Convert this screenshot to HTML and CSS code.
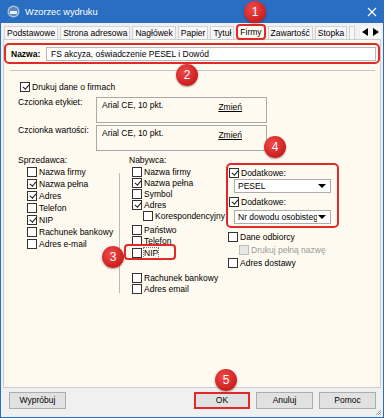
FILE: index.html
```html
<!DOCTYPE html>
<html lang="pl">
<head>
    <meta charset="UTF-8">
    <meta name="viewport" content="width=device-width, initial-scale=1.0">
    <title>Wzorzec wydruku</title>
    <link rel="stylesheet" href="styles.css">
</head>
<body>
<div class="window">
    <div class="titlebar">
        <svg class="app-icon" width="13" height="13" viewBox="0 0 13 13">
            <circle cx="6.5" cy="6.5" r="6" fill="#a9c3de"/>
            <circle cx="6.5" cy="6.5" r="4.6" fill="#5b86b8"/>
            <rect x="3" y="6" width="7" height="3" fill="#e8f0f8"/>
        </svg>
        <span class="title">Wzorzec wydruku</span>
        <svg class="close" width="10" height="10" viewBox="0 0 10 10">
            <path d="M1 1 L9 9 M9 1 L1 9" stroke="#fff" stroke-width="1.1"/>
        </svg>
    </div>

    <div class="tabs">
        <span class="tab">Podstawowe</span>
        <span class="tab">Strona adresowa</span>
        <span class="tab">Nagłówek</span>
        <span class="tab">Papier</span>
        <span class="tab">Tytuł</span>
        <span class="tab active">Firmy</span>
        <span class="tab">Zawartość</span>
        <span class="tab">Stopka</span>
        <span class="tab cut"></span>
        <span class="tab-arrows">
            <span class="arrow"><svg width="6" height="8" viewBox="0 0 6 8"><path d="M6 0 L0 4 L6 8 Z" fill="#000"/></svg></span>
            <span class="arrow"><svg width="6" height="8" viewBox="0 0 6 8"><path d="M0 0 L6 4 L0 8 Z" fill="#000"/></svg></span>
        </span>
    </div>

    <div class="page">
        <div class="name-row">
            <span class="name-label">Nazwa:</span>
            <span class="name-field">FS akcyza, oświadczenie PESEL i Dowód</span>
        </div>
        <div class="separator"></div>

        <div class="check print-row"><span class="cb on"></span>Drukuj dane o firmach</div>

        <div class="font-row">
            <span class="font-label">Czcionka etykiet:</span>
            <div class="font-box"><span>Arial CE, 10 pkt.</span><span class="link">Zmień</span></div>
        </div>
        <div class="font-row second">
            <span class="font-label">Czcionka wartości:</span>
            <div class="font-box"><span>Arial CE, 10 pkt.</span><span class="link">Zmień</span></div>
        </div>

        <div class="groups">
            <div class="seller">
                <div class="heading">Sprzedawca:</div>
                <div class="check"><span class="cb"></span>Nazwa firmy</div>
                <div class="check"><span class="cb on"></span>Nazwa pełna</div>
                <div class="check"><span class="cb on"></span>Adres</div>
                <div class="check"><span class="cb"></span>Telefon</div>
                <div class="check"><span class="cb on"></span>NIP</div>
                <div class="check"><span class="cb"></span>Rachunek bankowy</div>
                <div class="check"><span class="cb"></span>Adres e-mail</div>
            </div>
            <div class="divider"></div>
            <div class="buyer">
                <div class="heading">Nabywca:</div>
                <div class="check"><span class="cb"></span>Nazwa firmy</div>
                <div class="check"><span class="cb on"></span>Nazwa pełna</div>
                <div class="check"><span class="cb"></span>Symbol</div>
                <div class="check"><span class="cb on"></span>Adres</div>
                <div class="check sub"><span class="cb"></span>Korespondencyjny</div>
                <div class="check spaced"><span class="cb"></span>Państwo</div>
                <div class="check"><span class="cb"></span>Telefon</div>
                <div class="check nip"><span class="cb"></span><span class="focus">NIP</span></div>
                <div class="check far"><span class="cb"></span>Rachunek bankowy</div>
                <div class="check"><span class="cb"></span>Adres email</div>
            </div>
            <div class="extra">
                <div class="extra-box">
                    <div class="check"><span class="cb on"></span>Dodatkowe:</div>
                    <div class="select"><span class="select-text">PESEL</span><span class="caret"></span></div>
                    <div class="check second"><span class="cb on"></span>Dodatkowe:</div>
                    <div class="select"><span class="select-text">Nr dowodu osobistego</span><span class="caret"></span></div>
                </div>
                <div class="check tall"><span class="cb"></span>Dane odbiorcy</div>
                <div class="check tall disabled"><span class="cb"></span>Drukuj pełną nazwę</div>
                <div class="check tall"><span class="cb"></span>Adres dostawy</div>
            </div>
        </div>
    </div>

    <div class="footer">
        <span class="btn">Wypróbuj</span>
        <span class="btn ok">OK</span>
        <span class="btn">Anuluj</span>
        <span class="btn">Pomoc</span>
    </div>

    <svg class="grip" width="7" height="7" viewBox="0 0 7 7">
        <path d="M6 1 L1 6 M6 3 L3 6 M6 5 L5 6" stroke="#a0a0a0" stroke-width="1"/>
    </svg>

    <span class="badge b1">1</span>
    <span class="badge b2">2</span>
    <span class="badge b3">3</span>
    <span class="badge b4">4</span>
    <span class="badge b5">5</span>
</div>
</body>
</html>
```

FILE: styles.css
```css
:root {
  --blue: #2a6ec1;
  --red: #e02a2a;
  --cream: #fefaef;
  --face: #f0f0f0;
  --line: #a9a9a9;
}
body {
  margin: 0;
  background: #fff;
  font-family: "Liberation Sans", Arial, sans-serif;
  font-size: 8.5px;
  color: #000;
}
.window {
  position: relative;
  width: 384px;
  height: 418px;
  box-sizing: border-box;
  border: 1px solid var(--blue);
  border-top: 0;
  background: var(--face);
  display: flex;
  flex-direction: column;
}

/* title bar */
.titlebar {
  height: 23px;
  flex: none;
  background: var(--blue);
  display: flex;
  align-items: center;
  padding: 0 0 0 6px;
  color: #fff;
}
.app-icon {
  margin-right: 5px;
}
.title {
  font-size: 9.2px;
}
.close {
  margin-left: auto;
  margin-right: 6px;
}

/* tabs */
.tabs {
  height: 16px;
  flex: none;
  display: flex;
  align-items: flex-end;
  gap: 2px;
  padding-left: 3px;
}
.tab {
  box-sizing: border-box;
  height: 13px;
  line-height: 12px;
  padding: 0 2px;
  border: 1px solid #d2d2d2;
  border-bottom: 0;
  background: #f7f7f7;
  white-space: nowrap;
}
.tab.active {
  height: 16px;
  line-height: 13px;
  margin-bottom: -1px;
  border: 2px solid var(--red);
  border-radius: 4px;
  background: var(--cream);
  position: relative;
  z-index: 1;
}
.tab.cut {
  width: 6px;
  padding: 0;
}
.tab-arrows {
  margin-left: auto;
  margin-right: 2px;
  display: flex;
  gap: 1px;
  align-self: center;
  margin-top: 2px;
}
.arrow {
  width: 10px;
  height: 12px;
  display: flex;
  align-items: center;
  justify-content: center;
  background: #f7f7f7;
}

/* page */
.page {
  box-sizing: border-box;
  height: 349px;
  flex: none;
  margin: 0 2px;
  border: 1px solid #cdcdcd;
  background: var(--cream);
}
.name-row {
  box-sizing: border-box;
  width: 376px;
  height: 21px;
  margin-top: 3px;
  border: 2px solid var(--red);
  border-radius: 5px;
  display: flex;
  align-items: center;
  padding-left: 5px;
}
.name-label {
  font-weight: bold;
  width: 35px;
}
.name-field {
  box-sizing: border-box;
  width: 330px;
  height: 14px;
  line-height: 12px;
  padding-left: 4px;
  border: 1px solid #b8b8b8;
  background: #fff;
}
.separator {
  height: 1px;
  margin: 6px 5px 0 6px;
  background: #c6c6c6;
}

/* checkboxes */
.check {
  display: flex;
  align-items: center;
  gap: 2px;
  height: 12px;
  white-space: nowrap;
}
.cb {
  position: relative;
  box-sizing: border-box;
  width: 10px;
  height: 10px;
  flex: none;
  border: 1px solid #333;
  background: #fff;
}
.cb.on::after {
  content: "";
  position: absolute;
  left: 2.5px;
  top: 0;
  width: 2.5px;
  height: 5px;
  border: solid #1a1a1a;
  border-width: 0 1.6px 1.6px 0;
  transform: rotate(40deg);
}
.print-row {
  margin: 10px 0 0 16px;
}

/* font rows */
.font-row {
  display: flex;
  margin: 4px 0 0 14px;
}
.font-row.second {
  margin-top: 2px;
}
.font-label {
  width: 78px;
  line-height: 11px;
}
.font-box {
  box-sizing: border-box;
  width: 171px;
  height: 26px;
  border: 1px solid var(--line);
  padding: 2px 24px 0 5px;
  display: flex;
  line-height: 11px;
}
.link {
  margin-left: auto;
  margin-top: 2px;
  text-decoration: underline;
}

/* groups */
.groups {
  display: flex;
  margin-top: 3px;
}
.heading {
  line-height: 12px;
}
.seller {
  width: 101px;
  margin-left: 14px;
}
.seller .check {
  padding-left: 9px;
}
.divider {
  width: 1px;
  height: 120px;
  margin-top: 19px;
  background: #b9b9b9;
}
.buyer {
  width: 97px;
  padding-left: 9px;
}
.buyer .check {
  height: 11px;
  padding-left: 3px;
}
.buyer .check.sub {
  padding-left: 14px;
}
.buyer .check.spaced {
  margin-top: 3px;
}
.buyer .check.nip {
  position: relative;
  margin-top: 1px;
}
.buyer .check.nip::after {
  content: "";
  position: absolute;
  left: -5px;
  top: -3px;
  width: 48px;
  height: 12px;
  border: 2px solid var(--red);
  border-radius: 4px;
}
.focus {
  outline: 1px dotted #777;
}
.buyer .check.far {
  margin-top: 14px;
}
.extra {
  margin-top: 9px;
}
.extra-box {
  box-sizing: border-box;
  width: 113px;
  border: 2px solid var(--red);
  border-radius: 5px;
  padding: 2px 0 2px 1px;
}
.select {
  box-sizing: border-box;
  width: 97px;
  height: 14px;
  margin-left: 5px;
  border: 1px solid #ababab;
  background: #fff;
  display: flex;
  align-items: center;
  padding-left: 3px;
}
.extra-box .check.second {
  margin-top: 3px;
}
.extra-box .check.second + .select {
  margin-top: 2px;
}
.select-text {
  flex: 1;
  overflow: hidden;
  white-space: nowrap;
}
.caret {
  width: 0;
  height: 0;
  margin: 0 4px 0 1px;
  border-left: 4px solid transparent;
  border-right: 4px solid transparent;
  border-top: 4px solid #000;
}
.extra .check.tall {
  height: 13px;
  padding-left: 2px;
}
.extra-box + .check.tall {
  margin-top: 2px;
}
.extra .check.disabled {
  padding-left: 13px;
  color: #9a9a9a;
}
.check.disabled .cb {
  border-color: #bcbcbc;
  background: #e8e8e8;
}

/* footer */
.footer {
  display: flex;
  gap: 6px;
  padding: 4px 7px 0 8px;
}
.btn {
  box-sizing: border-box;
  width: 57px;
  height: 17px;
  line-height: 15px;
  text-align: center;
  border: 1px solid #adadad;
  background: #e1e1e1;
}
.btn.ok {
  margin-left: auto;
  width: 56px;
  border: 2px solid var(--red);
  line-height: 13px;
}
.grip {
  position: absolute;
  right: 1px;
  bottom: 1px;
}

/* annotation badges */
.badge {
  position: absolute;
  width: 22px;
  height: 22px;
  border-radius: 50%;
  background: radial-gradient(circle at 40% 35%, #f04a4a, #cc1f1f 70%);
  box-shadow: 0 1px 2px rgba(0, 0, 0, 0.35);
  color: #fff;
  font-size: 12px;
  line-height: 22px;
  text-align: center;
  z-index: 2;
}
.b1 { left: 243px; top: 1px; }
.b2 { left: 175px; top: 64px; }
.b3 { left: 101px; top: 246px; }
.b4 { left: 263px; top: 136px; }
.b5 { left: 214px; top: 369px; }
```
